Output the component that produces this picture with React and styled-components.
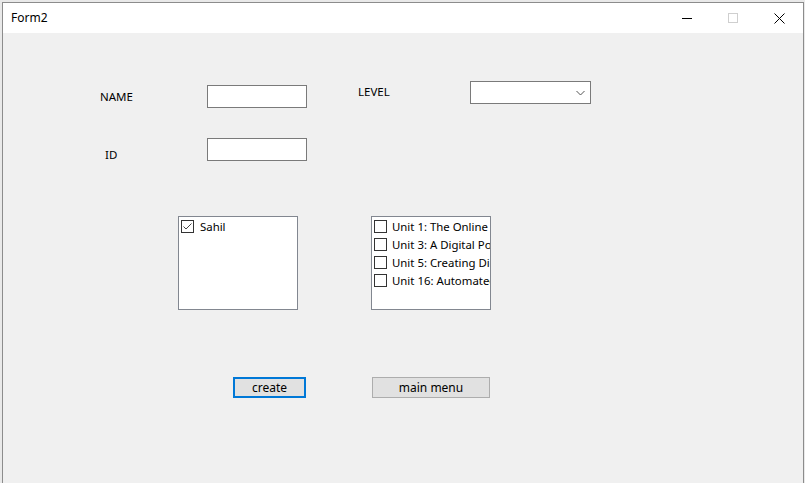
import React, { useState } from 'react';
import styled, { createGlobalStyle } from 'styled-components';

const GlobalStyle = createGlobalStyle`
    html, body {
        margin: 0;
        padding: 0;
        background: #e9e9e9;
        overflow: hidden;
    }
    body {
        font-family: 'Noto Sans', 'Open Sans', sans-serif;
        color: #000;
    }
`;

const Window = styled.div`
    margin: 2px 0 0 2px;
    width: 802px;
    height: 481px;
    border: 1px solid #8c8c8c;
    border-bottom: none;
    display: flex;
    flex-direction: column;
    background: #f0f0f0;
    box-sizing: border-box;
`;

const TitleBar = styled.div`
    height: 30px;
    background: #fff;
    display: flex;
    align-items: center;
    justify-content: space-between;
    flex-shrink: 0;
`;

const Title = styled.span`
    padding-left: 8px;
    font-size: 12px;
    line-height: 16px;
    margin-top: -1px;
`;

const Captions = styled.div`
    display: flex;
    height: 100%;
    margin-right: 1px;
`;

const CaptionButton = styled.div`
    width: 46px;
    height: 100%;
    display: flex;
    align-items: center;
    justify-content: center;
`;

const Client = styled.div`
    flex: 1;
    display: flex;
    flex-direction: column;
    background: #f0f0f0;
`;

const Row = styled.div`
    display: flex;
    align-items: flex-start;
    margin-top: ${p => p.top}px;
    padding-left: ${p => p.left}px;
    gap: ${p => p.gap || 0}px;
`;

const Label = styled.div`
    font-size: 11.5px;
    line-height: 14px;
    width: ${p => p.width}px;
    margin-top: ${p => p.top || 0}px;
    margin-left: ${p => p.left || 0}px;
    flex-shrink: 0;
`;

const TextBox = styled.input`
    box-sizing: border-box;
    width: 100px;
    height: 23px;
    border: 1px solid #7a7a7a;
    background: #fff;
    margin: ${p => p.top || 0}px 0 0 0;
    padding: 0 3px;
    font-family: inherit;
    font-size: 12px;
    outline: none;
`;

const Combo = styled.div`
    box-sizing: border-box;
    width: 121px;
    height: 23px;
    border: 1px solid #7a7a7a;
    background: #fff;
    margin-left: ${p => p.left || 0}px;
    display: flex;
    align-items: center;
    justify-content: flex-end;
    padding-right: 5px;
`;

const CheckList = styled.div`
    box-sizing: border-box;
    width: 120px;
    height: 94px;
    border: 1px solid #828790;
    background: #fff;
    padding: 0 0 0 2px;
    overflow: hidden;
`;

const Item = styled.label`
    display: flex;
    align-items: center;
    height: 18px;
    white-space: nowrap;
    font-size: 11.4px;
    cursor: default;
`;

const Box = styled.span`
    box-sizing: border-box;
    width: 13px;
    height: 13px;
    border: 1px solid #333;
    background: #fff;
    flex-shrink: 0;
    margin-right: ${p => p.gap}px;
    display: flex;
    align-items: center;
    justify-content: center;
`;

const Button = styled.button`
    box-sizing: border-box;
    width: ${p => p.width}px;
    height: 21px;
    background: #e1e1e1;
    border: ${p => (p.focused ? '2px solid #0078d7' : '1px solid #adadad')};
    font-family: inherit;
    font-size: 12px;
    line-height: 14px;
    padding: 0;
    color: #000;
`;

const units = [
    'Unit 1: The Online World',
    'Unit 3: A Digital Portfolio',
    'Unit 5: Creating Digital Graphics',
    'Unit 16: Automated Systems',
];

function Check({ checked, gap, onClick }) {
    return (
        <Box gap={gap} onClick={onClick}>
            {checked && (
                <svg width="11" height="11" viewBox="0 0 11 11">
                    <path d="M1.5 5.5 L4 8 L9.5 2.5" fill="none" stroke="#444" strokeWidth="1" />
                </svg>
            )}
        </Box>
    );
}

export default function App() {
    const [students, setStudents] = useState({ Sahil: true });
    const [picked, setPicked] = useState({});

    return (
        <>
            <GlobalStyle />
            <Window>
                <TitleBar>
                    <Title>Form2</Title>
                    <Captions>
                        <CaptionButton>
                            <svg width="10" height="10" viewBox="0 0 10 10">
                                <path d="M0 5.5 H10" stroke="#000" strokeWidth="1" />
                            </svg>
                        </CaptionButton>
                        <CaptionButton>
                            <svg width="10" height="10" viewBox="0 0 10 10">
                                <rect x="0.5" y="0.5" width="9" height="9" fill="none" stroke="#cfcfcf" strokeWidth="1" />
                            </svg>
                        </CaptionButton>
                        <CaptionButton>
                            <svg width="11" height="11" viewBox="0 0 11 11">
                                <path d="M0.5 0.5 L10.5 10.5 M10.5 0.5 L0.5 10.5" stroke="#000" strokeWidth="1" />
                            </svg>
                        </CaptionButton>
                    </Captions>
                </TitleBar>
                <Client>
                    <Row top={48} left={97}>
                        <Label width={107} top={9}>NAME</Label>
                        <TextBox top={4} />
                        <Label width={112} top={4} left={51}>LEVEL</Label>
                        <Combo>
                            <svg width="9" height="6" viewBox="0 0 9 6">
                                <path d="M0.5 1 L4.5 5 L8.5 1" fill="none" stroke="#555" strokeWidth="1" />
                            </svg>
                        </Combo>
                    </Row>
                    <Row top={30} left={102}>
                        <Label width={102} top={10}>ID</Label>
                        <TextBox />
                    </Row>
                    <Row top={54} left={175} gap={73}>
                        <CheckList>
                            {Object.keys(students).map(name => (
                                <Item key={name}>
                                    <Check
                                        gap={6}
                                        checked={students[name]}
                                        onClick={() => setStudents({ ...students, [name]: !students[name] })}
                                    />
                                    {name}
                                </Item>
                            ))}
                        </CheckList>
                        <CheckList>
                            {units.map(u => (
                                <Item key={u}>
                                    <Check
                                        gap={5}
                                        checked={!!picked[u]}
                                        onClick={() => setPicked({ ...picked, [u]: !picked[u] })}
                                    />
                                    {u}
                                </Item>
                            ))}
                        </CheckList>
                    </Row>
                    <Row top={67} left={230} gap={66}>
                        <Button width={73} focused>create</Button>
                        <Button width={118}>main menu</Button>
                    </Row>
                </Client>
            </Window>
        </>
    );
}
